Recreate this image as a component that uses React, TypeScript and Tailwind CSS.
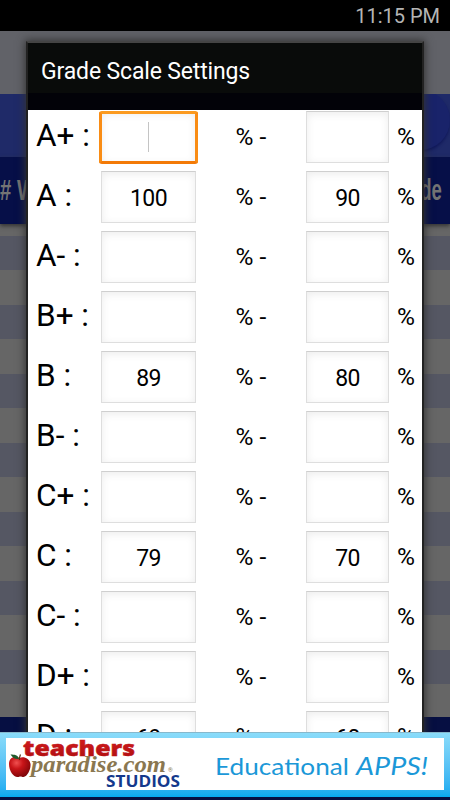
import clsx from "clsx";

type Grade = {
  name: string;
  from?: number;
  to?: number;
};

const grades: Grade[] = [
  { name: "A+" },
  { name: "A", from: 100, to: 90 },
  { name: "A-" },
  { name: "B+" },
  { name: "B", from: 89, to: 80 },
  { name: "B-" },
  { name: "C+" },
  { name: "C", from: 79, to: 70 },
  { name: "C-" },
  { name: "D+" },
  { name: "D", from: 69, to: 60 },
];

const stripes = [0, 1, 2, 3, 4, 5, 6];

function StatusBar() {
  return (
    <div className="h-[31px] shrink-0 bg-black pr-[10px] text-right text-[20px] leading-[32px] text-[#b5b5b5]">
      11:15 PM
    </div>
  );
}

function GradeBook() {
  return (
    <div className="flex grow flex-col bg-[#666]">
      <div className="h-[63px] shrink-0 bg-[#616268]" />
      <div className="flex h-[63px] shrink-0 justify-end overflow-hidden bg-[#1f2a68]">
        <div className="-mt-1 h-[60px] w-[60px] rounded-full bg-[#19236a] shadow-[0_2px_3px_#10185a]" />
      </div>
      <div className="flex h-[67px] shrink-0 items-center justify-between bg-[#060f48] pr-2 font-['Liberation_Sans',sans-serif] text-[29px] font-bold text-[#747474] shadow-[0_2px_4px_#333]">
        <span className="origin-left scale-x-[0.7]"># W</span>
        <span className="origin-right scale-x-[0.64]">de</span>
      </div>
      <div className="flex h-[493px] shrink-0 flex-col gap-[35px] overflow-hidden pt-3">
        {stripes.map((stripe) => (
          <div key={stripe} className="h-[34px] shrink-0 bg-[#555763]" />
        ))}
      </div>
      <div className="grow bg-[#060f42]" />
    </div>
  );
}

function ScoreField({
  value,
  focused,
  className,
}: {
  value?: number;
  focused?: boolean;
  className: string;
}) {
  return (
    <div
      className={clsx(
        "relative flex h-[52px] shrink-0 items-center justify-center border border-[#dedede] border-t-[#cfcfcf] bg-white text-[23px] tracking-[-0.6px] shadow-[inset_0_2px_8px_#ececec]",
        className
      )}
    >
      {focused && (
        <>
          <span className="h-[30px] w-px bg-[#c4c4c4]" />
          <div className="absolute -inset-x-[3px] -top-px -bottom-[2px] rounded-[3px] border-3 border-t-[#fb9a1f] border-r-[#f98c14] border-b-[#f37a07] border-l-[#f98c14]" />
        </>
      )}
      {value !== undefined && <span className="pt-[5px]">{value}</span>}
    </div>
  );
}

function GradeRow({ grade, focused }: { grade: Grade; focused: boolean }) {
  return (
    <div className="flex h-[60px] shrink-0 pt-px pl-2 text-black">
      <span className="w-[65px] shrink-0 text-[31.5px] leading-[49px] whitespace-nowrap">
        {grade.name} :
      </span>
      <ScoreField value={grade.from} focused={focused} className="w-[95px]" />
      <span className="w-[110px] shrink-0 pl-[39.5px] text-[24.5px] leading-[51px]">
        % -
      </span>
      <ScoreField value={grade.to} className="w-[83px]" />
      <span className="pl-2 text-[24.5px] leading-[51px]">%</span>
    </div>
  );
}

function GradeScaleDialog() {
  return (
    <div className="absolute top-[41px] right-[26px] bottom-0 left-[26px] flex flex-col overflow-hidden border-2 border-b-0 border-[#444] border-r-[#222] border-l-[#222] bg-white shadow-[0_0_8px_1px_#333]">
      <div className="h-[67px] shrink-0 bg-linear-to-b from-[#090b0a] from-75% to-[#020208] to-75% pl-[13px] text-[23px] leading-[58px] tracking-[-0.15px] text-white">
        Grade Scale Settings
      </div>
      {grades.map((grade, index) => (
        <GradeRow key={grade.name} grade={grade} focused={index === 0} />
      ))}
    </div>
  );
}

function Logo() {
  return (
    <svg width="180" height="52" viewBox="6 738 180 52">
      <defs>
        <radialGradient id="apple" cx="0.35" cy="0.3" r="0.75">
          <stop offset="0" stopColor="#f05050" />
          <stop offset="0.4" stopColor="#c81418" />
          <stop offset="1" stopColor="#7c0508" />
        </radialGradient>
        <linearGradient id="teachers" x1="0" y1="0" x2="0" y2="1">
          <stop offset="0" stopColor="#e02020" />
          <stop offset="1" stopColor="#a80c10" />
        </linearGradient>
      </defs>
      <path
        d="M19.5 758c-4-2.5-10.5-1-10.5 6 0 7 4.5 13 8.5 13 1.5 0 2-.5 3-.5s1.5.5 3 .5c4-.5 7.5-8 7-13-.8-5.5-7-8-11-6z"
        fill="url(#apple)"
      />
      <path d="M19.5 760c-.5-2 .5-4 1-5.5" stroke="#5a3010" strokeWidth="1.2" fill="none" />
      <path d="M19 759c-4 .5-6-1-8.5-4.5 4 0 7.500.5 8.500 4.500z" fill="#1f5a2c" />
      <text
        x="23"
        y="755.5"
        textLength="112"
        lengthAdjust="spacingAndGlyphs"
        className="font-['Open_Sans',sans-serif] text-[21.5px] font-extrabold"
        fill="url(#teachers)"
        stroke="#c01418"
        strokeWidth="0.5"
      >
        teachers
      </text>
      <text
        x="31"
        y="772"
        textLength="135"
        lengthAdjust="spacingAndGlyphs"
        className="font-['Liberation_Serif',serif] text-[24px] font-bold italic"
        fill="#8a7750"
      >
        paradise.com
      </text>
      <text x="168" y="772" className="text-[6px]" fill="#8a7750">
        ®
      </text>
      <text
        x="106"
        y="787"
        textLength="74"
        lengthAdjust="spacingAndGlyphs"
        className="font-['Open_Sans',sans-serif] text-[16.5px] font-bold"
        fill="#14398c"
      >
        STUDIOS
      </text>
    </svg>
  );
}

function AdBanner() {
  return (
    <div className="absolute inset-x-0 bottom-0 h-[68px] bg-[#060f42] pb-[3px]">
      <div className="h-[65px] border-t border-[#86b8cc] bg-linear-to-b from-[#8adcfa] to-[#04aaf0] px-1.5 pt-[5px] pb-[7px]">
        <div className="flex h-full items-center bg-white">
          <Logo />
          <svg width="258" height="52" viewBox="186 738 258 52">
            <g className="font-['Lato',sans-serif]" fill="#1b98d8">
              <text
                x="215"
                y="775"
                textLength="134"
                lengthAdjust="spacingAndGlyphs"
                className="text-[24px]"
              >
                Educational
              </text>
              <text
                x="356"
                y="775"
                textLength="72"
                lengthAdjust="spacingAndGlyphs"
                className="text-[25px] italic"
              >
                APPS!
              </text>
            </g>
          </svg>
        </div>
      </div>
    </div>
  );
}

function App() {
  return (
    <div className="relative flex h-[800px] w-[450px] flex-col overflow-hidden bg-black font-['Roboto',sans-serif]">
      <StatusBar />
      <GradeBook />
      <GradeScaleDialog />
      <AdBanner />
    </div>
  );
}

export default App;
